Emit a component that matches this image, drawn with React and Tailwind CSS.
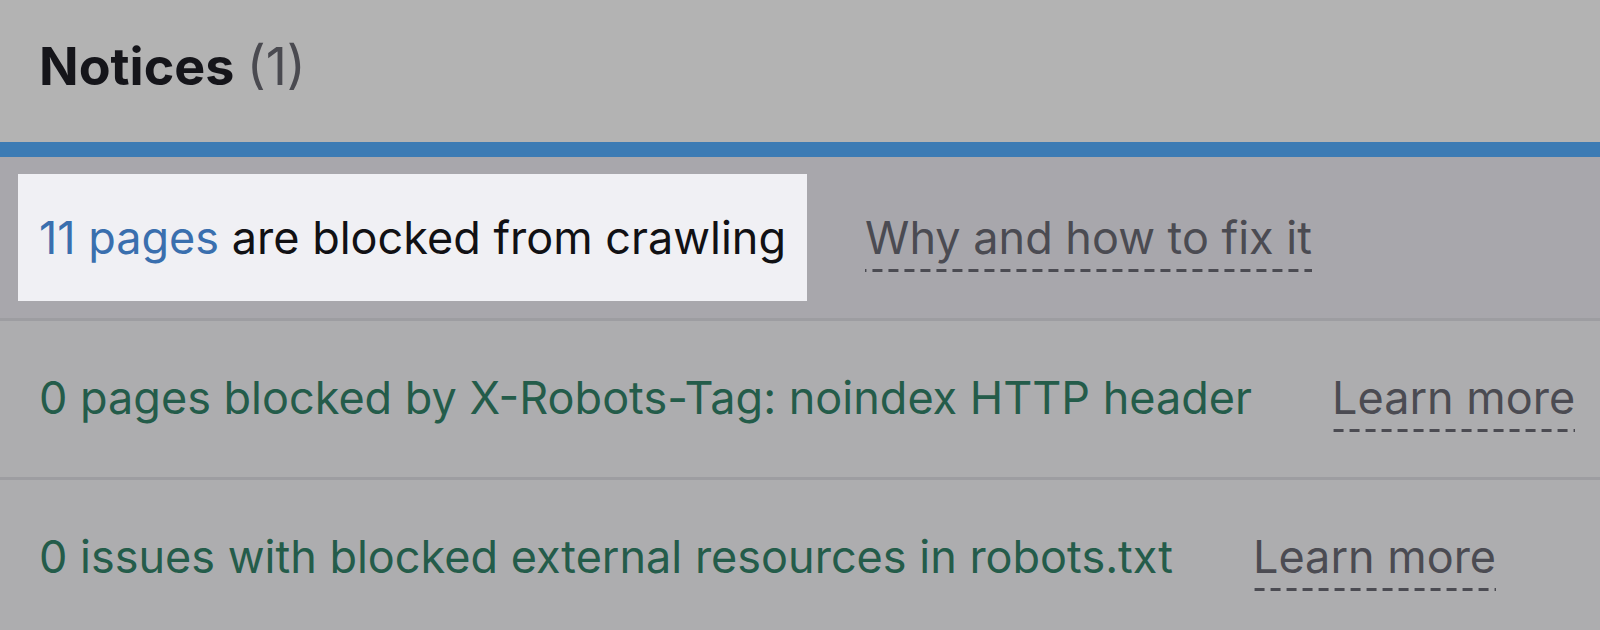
export default function App() {
  return (
    <div className="w-[1600px] h-[630px] overflow-hidden bg-[#b3b3b3] font-['Inter',sans-serif]">
      {/* Header */}
      <div className="h-[142px] flex items-center pl-[39px] pb-[8px]">
        <h2 className="text-[52px] leading-none font-bold text-[#15151a]">
          Notices <span className="font-normal text-[#4a4a50]">(1)</span>
        </h2>
      </div>

      {/* Tab indicator */}
      <div className="h-[15px] bg-[#3c7bb4]" />

      {/* Highlighted row */}
      <div className="h-[161px] bg-[#a8a7ac] flex items-center pl-[18px]">
        <div className="flex items-baseline gap-[58px]">
          <div className="h-[127px] bg-[#f0f0f4] flex items-center px-[21px]">
            <span className="text-[45px] leading-none text-[#111114]">
              <span className="text-[#3a6fae]">11 pages</span> are blocked from crawling
            </span>
          </div>
          <LinkText>Why and how to fix it</LinkText>
        </div>
      </div>

      <div className="h-[3px] bg-[#9d9da1]" />

      <Row text="0 pages blocked by X-Robots-Tag: noindex HTTP header" />

      <div className="h-[3px] bg-[#9d9da1]" />

      <Row text="0 issues with blocked external resources in robots.txt" />
    </div>
  );
}

function Row({ text }) {
  return (
    <div className="h-[156px] bg-[#adadaf] flex items-center pl-[39px]">
      <div className="flex items-baseline gap-[80px] pt-[9px]">
        <span className="text-[45px] leading-none text-[#245c4a]">{text}</span>
        <LinkText>Learn more</LinkText>
      </div>
    </div>
  );
}

function LinkText({ children }) {
  return (
    <span className="text-[45px] leading-none text-[#4b4b52] pb-[12px] bg-[linear-gradient(to_right,#4b4b52_60%,transparent_0)] bg-[length:16px_3px] bg-repeat-x bg-bottom">
      {children}
    </span>
  );
}
